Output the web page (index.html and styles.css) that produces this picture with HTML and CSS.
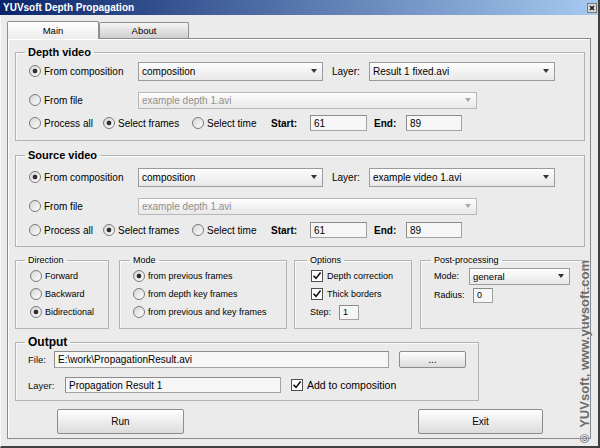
FILE: index.html
```html
<!DOCTYPE html>
<html>
<head>
<meta charset="utf-8">
<title>YUVsoft Depth Propagation</title>
<link rel="stylesheet" href="styles.css">
</head>
<body>
<div class="window">
  <div class="titlebar">
    <span class="title">YUVsoft Depth Propagation</span>
    <span class="close"><svg width="10" height="10" viewBox="0 0 10 10"><rect x="0.5" y="0.5" width="9" height="9" fill="#d6d6d6" stroke="#7a7a7a"/><path d="M3 3 L7 7 M7 3 L3 7" stroke="#111" stroke-width="1.4"/></svg></span>
  </div>
  <div class="tabs">
    <div class="tab active">Main</div>
    <div class="tab">About</div>
  </div>
  <div class="panel">
    <fieldset class="group video depth">
      <legend class="big">Depth video</legend>
      <div class="row">
        <label class="opt col1"><span class="radio on"></span>From composition</label>
        <div class="combo w185"><span class="val">composition</span><i class="arrow"></i></div>
        <span class="lbl layer">Layer:</span>
        <div class="combo w186"><span class="val">Result 1 fixed.avi</span><i class="arrow"></i></div>
      </div>
      <div class="row r2">
        <label class="opt col1"><span class="radio"></span>From file</label>
        <div class="combo dis w339"><span class="val">example depth 1.avi</span><i class="arrow"></i></div>
      </div>
      <div class="row r3">
        <label class="opt o1"><span class="radio"></span>Process all</label>
        <label class="opt o2"><span class="radio on"></span>Select frames</label>
        <label class="opt o3"><span class="radio"></span>Select time</label>
        <span class="lbl bold start">Start:</span>
        <div class="field w57">61</div>
        <span class="lbl bold end">End:</span>
        <div class="field w56">89</div>
      </div>
    </fieldset>

    <fieldset class="group video source">
      <legend class="big">Source video</legend>
      <div class="row">
        <label class="opt col1"><span class="radio on"></span>From composition</label>
        <div class="combo w185"><span class="val">composition</span><i class="arrow"></i></div>
        <span class="lbl layer">Layer:</span>
        <div class="combo w186"><span class="val">example video 1.avi</span><i class="arrow"></i></div>
      </div>
      <div class="row r2">
        <label class="opt col1"><span class="radio"></span>From file</label>
        <div class="combo dis w339"><span class="val">example depth 1.avi</span><i class="arrow"></i></div>
      </div>
      <div class="row r3s">
        <label class="opt o1"><span class="radio"></span>Process all</label>
        <label class="opt o2"><span class="radio on"></span>Select frames</label>
        <label class="opt o3"><span class="radio"></span>Select time</label>
        <span class="lbl bold start">Start:</span>
        <div class="field w57">61</div>
        <span class="lbl bold end">End:</span>
        <div class="field w56">89</div>
      </div>
    </fieldset>

    <div class="settings">
      <fieldset class="group small direction">
        <legend>Direction</legend>
        <label class="opt srow"><span class="radio"></span>Forward</label>
        <label class="opt srow"><span class="radio"></span>Backward</label>
        <label class="opt srow"><span class="radio on"></span>Bidirectional</label>
      </fieldset>
      <fieldset class="group small mode">
        <legend>Mode</legend>
        <label class="opt srow"><span class="radio on"></span>from previous frames</label>
        <label class="opt srow"><span class="radio"></span>from depth key frames</label>
        <label class="opt srow"><span class="radio"></span>from previous and key frames</label>
      </fieldset>
      <fieldset class="group small options">
        <legend>Options</legend>
        <label class="opt srow"><span class="check"><svg width="10" height="10" viewBox="0 0 10 10"><path d="M1.5 4.8 L4 7.4 L8.6 1.6" fill="none" stroke="#111" stroke-width="1.6"/></svg></span>Depth correction</label>
        <label class="opt srow"><span class="check"><svg width="10" height="10" viewBox="0 0 10 10"><path d="M1.5 4.8 L4 7.4 L8.6 1.6" fill="none" stroke="#111" stroke-width="1.6"/></svg></span>Thick borders</label>
        <div class="srow step">
          <span class="lbl steplbl">Step:</span>
          <div class="field tiny">1</div>
        </div>
      </fieldset>
      <fieldset class="group small post">
        <legend>Post-processing</legend>
        <div class="srow">
          <span class="lbl modelbl">Mode:</span>
          <div class="combo pcombo"><span class="val">general</span><i class="arrow"></i></div>
        </div>
        <div class="srow radius">
          <span class="lbl radlbl">Radius:</span>
          <div class="field tiny">0</div>
        </div>
      </fieldset>
    </div>

    <fieldset class="group output">
      <legend class="big2">Output</legend>
      <div class="orow">
        <span class="lbl olbl filelbl">File:</span>
        <div class="field w335">E:\work\PropagationResult.avi</div>
        <div class="btn browse">...</div>
      </div>
      <div class="orow r2o">
        <span class="lbl olbl layerlbl">Layer:</span>
        <div class="field w216">Propagation Result 1</div>
        <label class="opt addcomp"><span class="check"><svg width="10" height="10" viewBox="0 0 10 10"><path d="M1.5 4.8 L4 7.4 L8.6 1.6" fill="none" stroke="#111" stroke-width="1.6"/></svg></span>Add to composition</label>
      </div>
    </fieldset>

    <div class="actions">
      <div class="btn big-btn run">Run</div>
      <div class="btn big-btn exit">Exit</div>
    </div>
  </div>
  <div class="watermark">© YUVsoft, www.yuvsoft.com</div>
</div>
</body>
</html>
```

FILE: styles.css
```css
* { box-sizing: border-box; }
html, body { margin: 0; padding: 0; }
body {
  width: 600px;
  height: 448px;
  overflow: hidden;
  background: #ebebeb;
  font-family: "Liberation Sans", Arial, sans-serif;
  font-size: 10px;
  color: #000;
}
.window {
  position: relative;
  width: 600px;
  height: 448px;
  background: #ebebeb;
  border-right: 2px solid #404040;
  border-bottom: 2px solid #404040;
  border-left: 1px solid #fafafa;
}
.titlebar {
  height: 15px;
  display: flex;
  align-items: center;
  background: linear-gradient(to right, #0a246a, #a6caf0);
  margin-left: -1px;
}
.title {
  color: #fff;
  font-weight: bold;
  font-size: 10px;
  padding-left: 3px;
}
.close {
  margin-left: auto;
  margin-right: 1px;
  width: 10px;
  height: 10px;
  display: flex;
}
.tabs {
  display: flex;
  align-items: flex-end;
  height: 23px;
  padding-left: 6px;
}
.tab {
  width: 90px;
  height: 16px;
  border: 1px solid #8e8e8e;
  border-bottom: none;
  border-radius: 2px 2px 0 0;
  background: linear-gradient(#f4f4f4, #cfcfcf);
  display: flex;
  align-items: center;
  justify-content: center;
  font-size: 9.5px;
}
.tab.active {
  width: 92px;
  height: 18px;
  margin-bottom: -1px;
  position: relative;
  z-index: 1;
  background: linear-gradient(#ffffff, #ebebeb);
}
.panel {
  margin-left: 6px;
  width: 584px;
  height: 401px;
  border: 1px solid #8a8a8a;
  box-shadow: inset 1px 1px 0 #fff;
  padding: 6px 0 0 7px;
}
.group {
  margin: 0;
  min-width: 0;
  border: 1px solid #b3b3b3;
  box-shadow: inset 1px 1px 0 #fafafa;
}
legend {
  padding: 0 3px;
  line-height: 12px;
  font-size: 9px;
}
legend.big {
  font-size: 11px;
  font-weight: bold;
  line-height: 14px;
  margin-left: -4px;
}
legend.big2 {
  font-size: 12px;
  font-weight: bold;
  line-height: 14px;
  margin-left: -3px;
}
.video {
  width: 570px;
  padding: 2px 0 7px 13px;
}
.video.source {
  margin-top: 7px;
  padding: 5px 0 6px 13px;
}
.row {
  display: flex;
  align-items: center;
  height: 20px;
}
.row.r2 { margin-top: 9px; }
.row.r3 { margin-top: 3px; }
.row.r3s { margin-top: 4px; }
.opt {
  display: flex;
  align-items: center;
  white-space: nowrap;
}
.col1 { width: 109px; }
.o1 { width: 74px; }
.o2 { width: 89px; }
.o3 { width: 79px; }
.lbl { white-space: nowrap; }
.bold { font-weight: bold; }
.start { width: 39px; }
.end { width: 32px; margin-left: 7px; }
.layer { margin-left: 9px; width: 37px; }
.radio {
  flex: none;
  width: 12px;
  height: 12px;
  border-radius: 50%;
  border: 1px solid #7a7a7a;
  background: linear-gradient(135deg, #d5d5d5, #ffffff);
  margin-right: 3px;
}
.radio.on {
  background: radial-gradient(circle at 50% 50%, #2e2e2e 0, #2e2e2e 2px, transparent 2.7px), linear-gradient(135deg, #d5d5d5, #ffffff);
}
.check {
  flex: none;
  width: 12px;
  height: 12px;
  border: 1px solid #4f4f4f;
  background: #fff;
  margin-right: 4px;
  display: flex;
}
.combo {
  display: flex;
  align-items: center;
  height: 19px;
  border: 1px solid #9b9b9b;
  background: linear-gradient(#fdfdfd, #e8e8e8);
  padding-left: 3px;
  white-space: nowrap;
}
.combo .val { flex: 1; overflow: hidden; }
.combo .arrow {
  width: 0;
  height: 0;
  border-left: 3px solid transparent;
  border-right: 3px solid transparent;
  border-top: 4px solid #333;
  margin-right: 5px;
}
.combo.dis {
  height: 17px;
  color: #8f8f8f;
  border-color: #b8b8b8;
}
.combo.dis .arrow { border-top-color: #a8a8a8; }
.w185 { width: 185px; }
.w186 { width: 186px; }
.w339 { width: 339px; }
.field {
  display: flex;
  align-items: center;
  height: 16px;
  border: 1px solid #a2a2a2;
  border-top-color: #8c8c8c;
  border-left-color: #8c8c8c;
  background: #f6f6f6;
  padding-left: 3px;
  white-space: nowrap;
}
.w57 { width: 57px; }
.w56 { width: 56px; }
.w335 { width: 335px; height: 17px; }
.w216 { width: 216px; }
.settings {
  display: flex;
  margin-top: 7px;
  width: 570px;
}
.small {
  font-size: 9px;
  padding: 1px 0 7px 14px;
}
.srow {
  height: 18px;
  display: flex;
  align-items: center;
}
.direction { width: 94px; margin-right: 10px; }
.direction legend { margin-left: -5px; }
.mode { width: 168px; margin-right: 7px; padding-left: 13px; }
.mode legend { margin-left: -3px; }
.options { width: 118px; margin-right: 8px; padding-left: 16px; }
.options legend { margin-left: -4px; }
.post { width: 165px; padding-left: 13px; }
.post legend { margin-left: -3px; }
.steplbl { width: 29px; margin-left: -1px; }
.field.tiny { width: 20px; height: 15px; }
.modelbl { width: 35px; }
.radlbl { width: 39px; }
.pcombo { width: 101px; height: 17px; font-size: 9.5px; }
.radius { margin-top: 1px; }
.output {
  width: 464px;
  margin-top: 6px;
  padding: 1px 0 6px 12px;
}
.orow {
  height: 18px;
  display: flex;
  align-items: center;
}
.orow.r2o { margin-top: 8px; }
.olbl { font-size: 9.5px; color: #111; }
.filelbl { width: 26px; }
.layerlbl { width: 37px; }
.btn {
  display: flex;
  align-items: center;
  justify-content: center;
  border: 1px solid #8c8c8c;
  border-radius: 2px;
  background: linear-gradient(#fefefe, #dcdcdc);
}
.browse { width: 67px; height: 17px; margin-left: 10px; }
.addcomp { margin-left: 10px; font-size: 10.5px; }
.actions {
  display: flex;
  margin-top: 8px;
}
.big-btn { width: 127px; height: 25px; }
.run { margin-left: 42px; }
.exit { margin-left: 234px; width: 125px; }
.watermark {
  position: absolute;
  left: 577px;
  bottom: 0;
  writing-mode: vertical-rl;
  transform: rotate(180deg);
  font-family: "Liberation Sans", Arial, sans-serif;
  font-weight: bold;
  font-size: 13px;
  line-height: 14px;
  color: #6a6a6a;
  text-shadow: 0 0 1px #fff;
  white-space: nowrap;
}
```
